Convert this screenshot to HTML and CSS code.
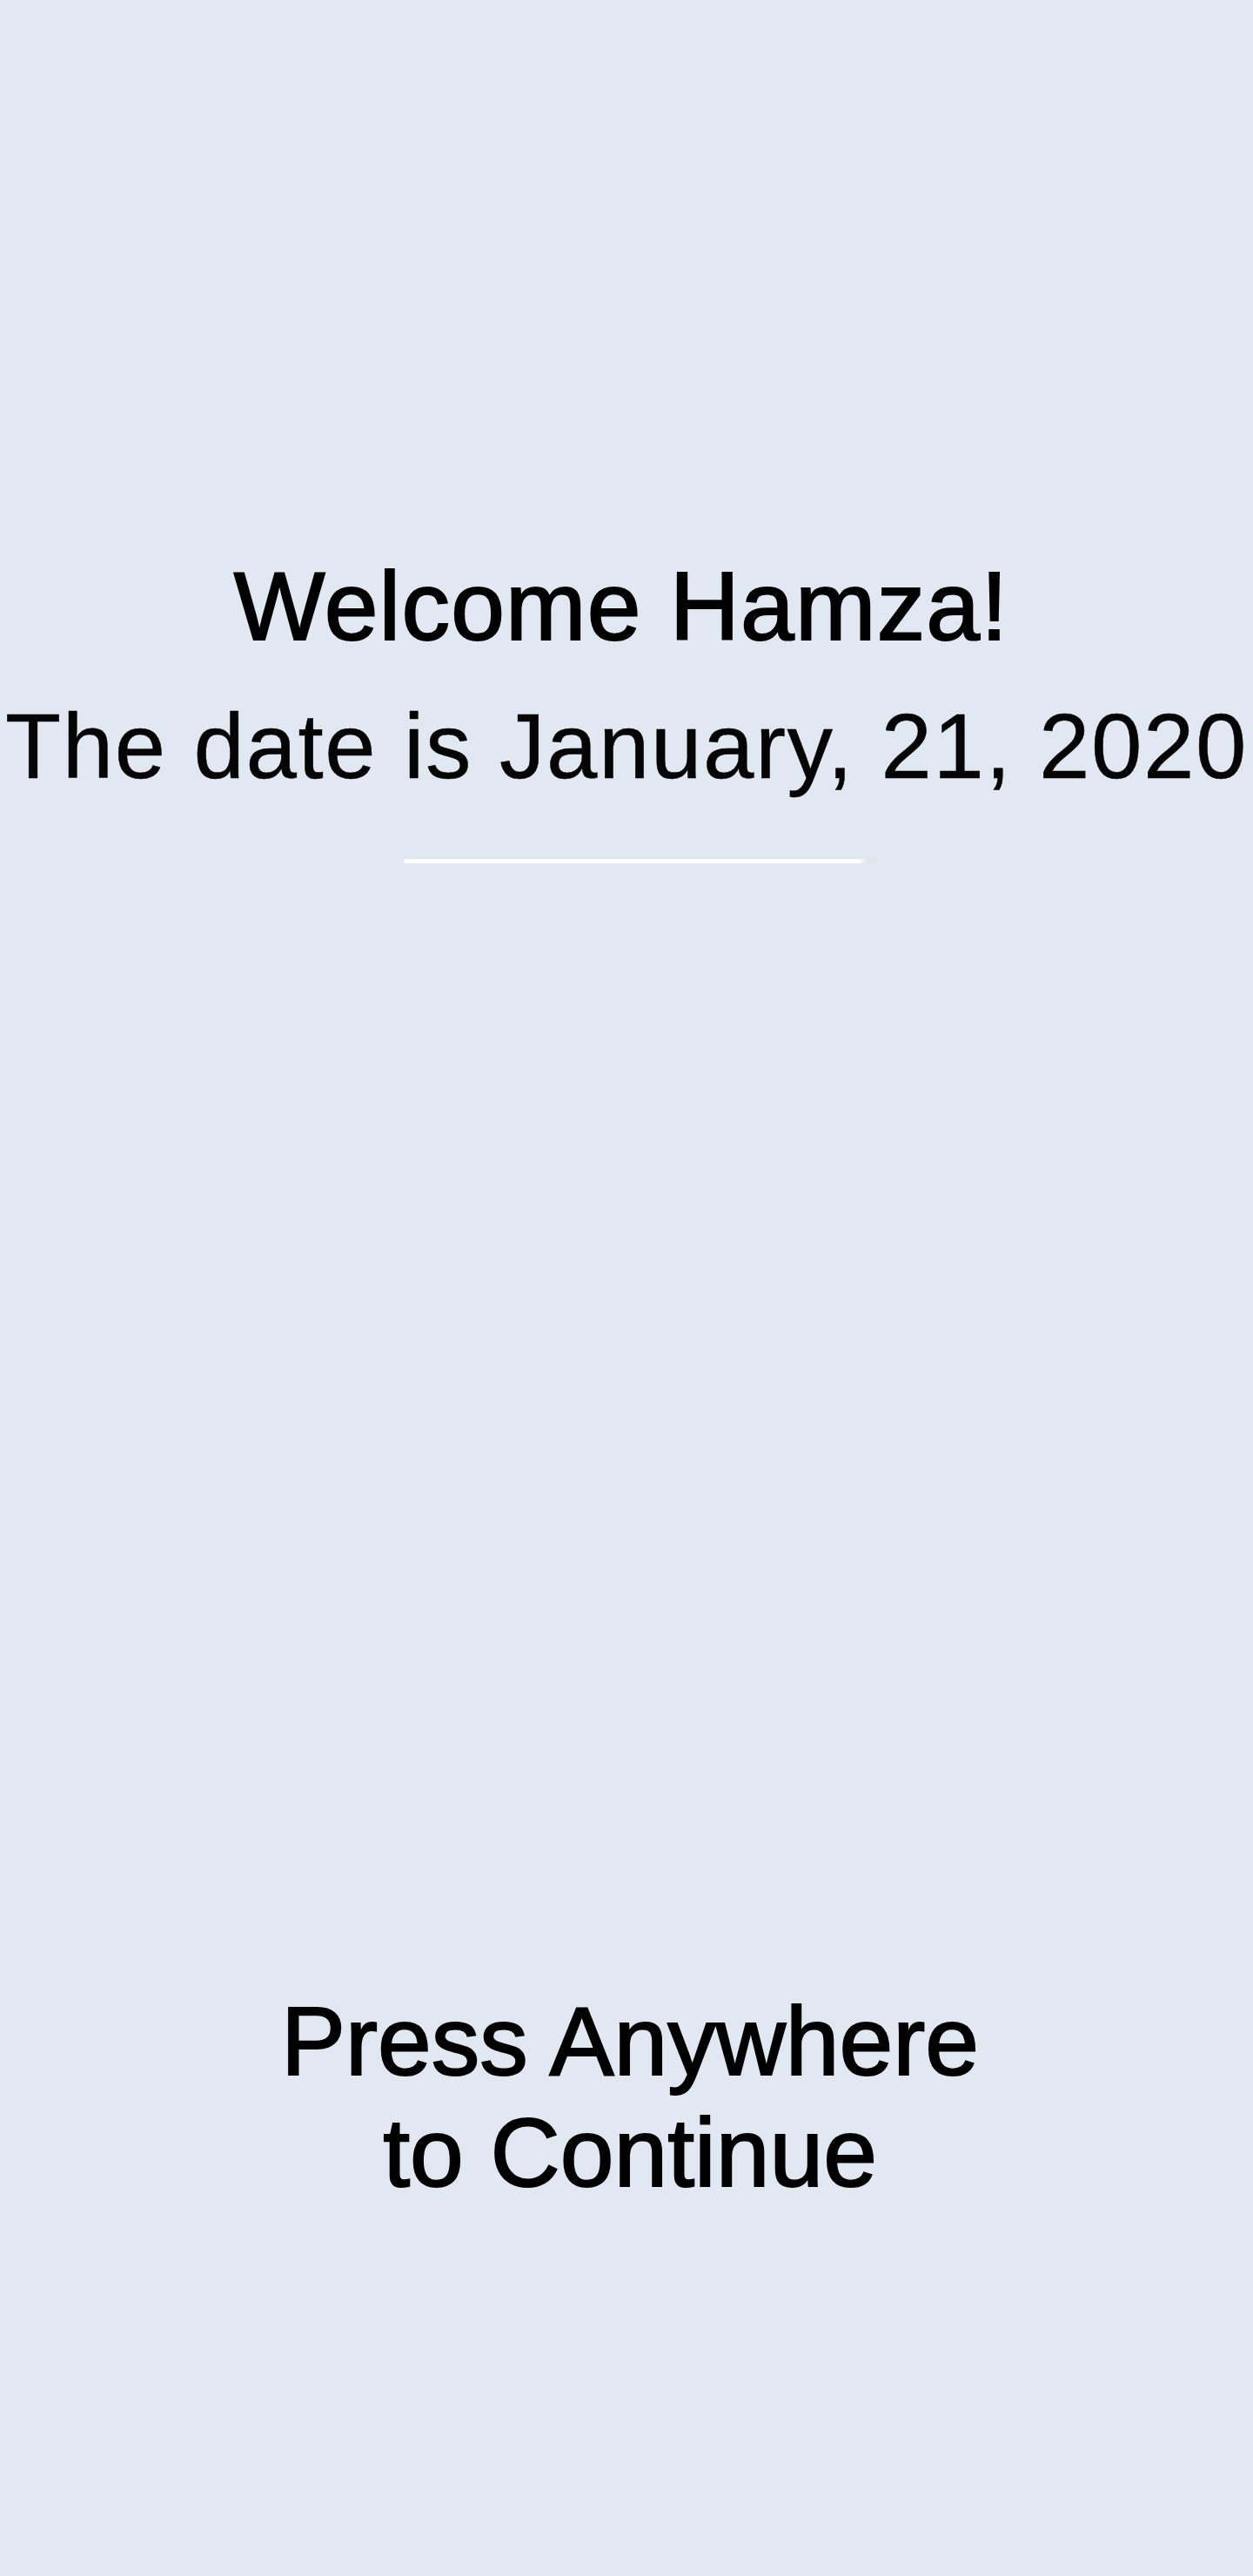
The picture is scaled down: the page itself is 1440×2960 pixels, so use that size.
FILE: index.html
```html
<!DOCTYPE html>
<html lang="en">
<head>
<meta charset="utf-8">
<title>Welcome</title>
<link rel="stylesheet" href="styles.css">
</head>
<body>
<main class="screen">
  <section class="greeting">
    <h1 class="welcome">Welcome Hamza!</h1>
    <p class="date">The date is January, 21, 2020</p>
    <div class="divider"></div>
  </section>
  <p class="press">Press Anywhere<br>to Continue</p>
</main>
</body>
</html>
```

FILE: styles.css
```css
html, body {
  margin: 0;
  padding: 0;
  background: #e1e8f1;
}

.screen {
  min-height: 2960px;
  display: flex;
  flex-direction: column;
  font-family: "Liberation Sans", Arial, sans-serif;
  color: #000;
  text-align: center;
}

.greeting {
  padding-top: 633px;
  display: flex;
  flex-direction: column;
}

.welcome {
  margin: 0;
  padding-right: 12px;
  font-size: 111px;
  font-weight: 400;
  line-height: 128px;
  letter-spacing: 1.2px;
  white-space: nowrap;
  -webkit-text-stroke: 2px #000;
}

.date {
  margin: 35px 0 0;
  font-size: 105px;
  line-height: 124px;
  letter-spacing: 1.6px;
  white-space: nowrap;
  color: #050505;
  -webkit-text-stroke: 0.5px #050505;
}

.divider {
  margin: 67px 0 0 464px;
  width: 544px;
  height: 5px;
  border-radius: 3px;
  background: linear-gradient(to right, #ffffff 0%, #ffffff 96%, #e3e5e8 98%, #dde3ea 100%);
}

.press {
  margin: 1290px 0 0;
  padding-left: 8px;
  font-size: 111px;
  line-height: 128px;
  white-space: nowrap;
  -webkit-text-stroke: 2px #000;
}
```
